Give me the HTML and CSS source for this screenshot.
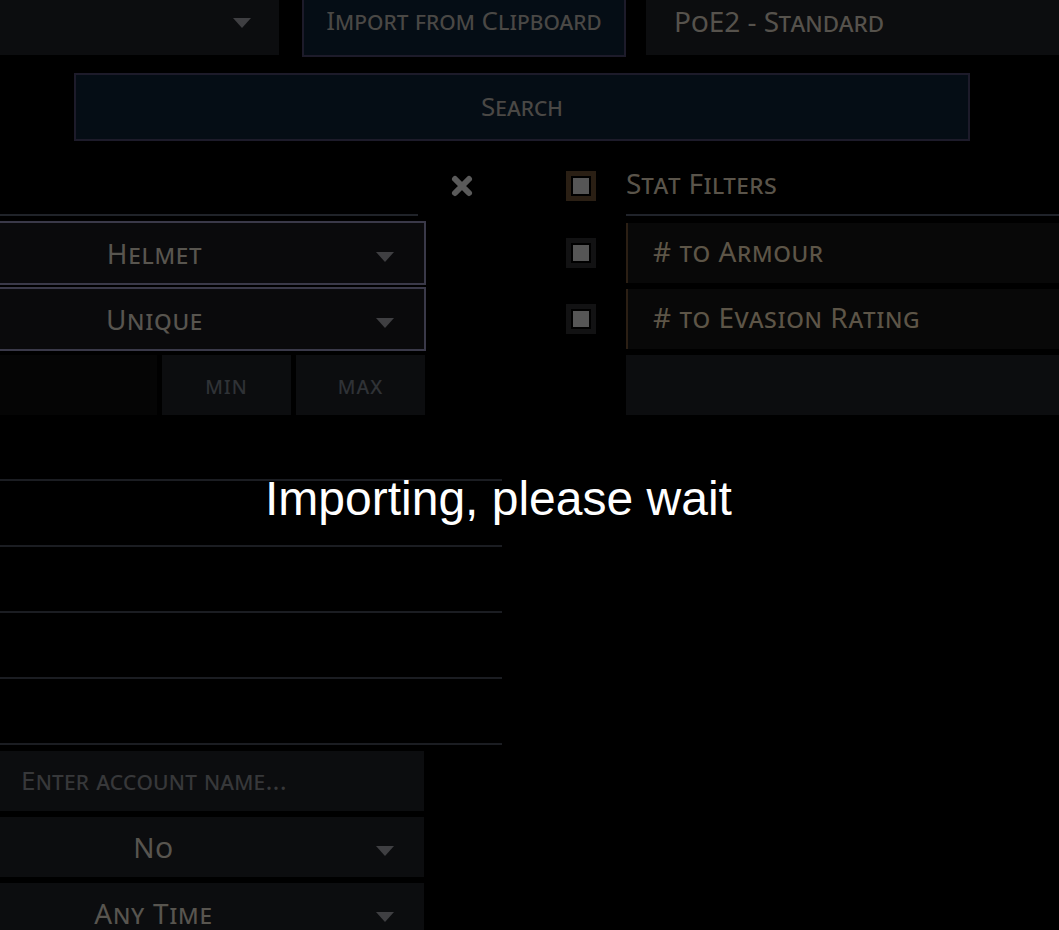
FILE: index.html
```html
<!DOCTYPE html>
<html lang="en">
<head>
<meta charset="utf-8">
<title>Trade - Importing</title>
<link rel="stylesheet" href="styles.css">
</head>
<body>
<div class="page">
  <header class="topbar">
    <div class="league-select"><span class="caret"></span></div>
    <button class="btn import-btn">Import from Clipboard</button>
    <div class="league-box">PoE2 - Standard</div>
  </header>

  <div class="search-row">
    <button class="btn search-btn">Search</button>
  </div>

  <main class="filters">
    <section class="type-filters">
      <div class="panel-head">
        <div class="head-title"></div>
        <span class="remove">
          <svg width="26" height="24" viewBox="0 0 26 24"><path d="M6 5 L20 19 M20 5 L6 19" stroke="#5a5a5a" stroke-width="6" stroke-linecap="round" fill="none"/></svg>
        </span>
      </div>
      <div class="select bordered first"><span>Helmet</span><span class="caret"></span></div>
      <div class="select bordered second"><span>Unique</span><span class="caret"></span></div>
      <div class="range">
        <div class="range-label"></div>
        <div class="range-input">min</div>
        <div class="range-input">max</div>
      </div>
      <div class="blank-row"></div>
      <div class="blank-row"></div>
      <div class="blank-row"></div>
      <div class="blank-row"></div>
      <div class="blank-row"></div>
      <input class="text-input" type="text" placeholder="Enter account name...">
      <div class="select plain"><span>No</span><span class="caret"></span></div>
      <div class="select plain"><span>Any Time</span><span class="caret"></span></div>
    </section>

    <section class="stat-filters">
      <div class="check head-check"><span class="check-dot"></span></div>
      <div class="stat-head">Stat Filters</div>
      <div class="check"><span class="check-dot"></span></div>
      <div class="stat-row"># to Armour</div>
      <div class="check"><span class="check-dot"></span></div>
      <div class="stat-row"># to Evasion Rating</div>
      <div class="stat-empty"></div>
    </section>
  </main>

  <div class="overlay">
    <p class="overlay-msg">Importing, please wait</p>
  </div>
</div>
</body>
</html>
```
FILE: styles.css
```css
html, body {
  margin: 0;
  padding: 0;
  background: #000;
  overflow: hidden;
  width: 1059px;
  height: 930px;
}

.page {
  font-family: "Noto Sans", "DejaVu Sans", sans-serif;
  font-variant-caps: small-caps;
  color: #57544f;
  width: 1059px;
  height: 930px;
  overflow: hidden;
  position: relative;
}

/* ---------- top bar ---------- */
.topbar {
  display: flex;
  align-items: flex-start;
  margin-top: -12px;
  height: 69px;
}

.league-select {
  position: relative;
  width: 279px;
  height: 67px;
  background: #0c0d0f;
  flex: 0 0 auto;
}
.league-select .caret {
  position: absolute;
  right: 28px;
  top: 30px;
}

.caret {
  width: 0;
  height: 0;
  border-left: 9.5px solid transparent;
  border-right: 9.5px solid transparent;
  border-top: 10px solid #3f3f42;
}

.btn {
  font-family: inherit;
  font-variant-caps: small-caps;
  font-size: 26px;
  color: #4a4845;
  background: #050d15;
  border: 2px solid #1d1b2a;
  padding: 0;
  margin: 0;
  display: flex;
  align-items: center;
  justify-content: center;
  box-sizing: border-box;
}

.import-btn {
  margin-left: 23px;
  width: 324px;
  height: 69px;
  border-top: none;
  padding-bottom: 3px;
}

.league-box {
  margin-left: 20px;
  flex: 1 1 auto;
  height: 67px;
  background: #0c0d0f;
  font-size: 28px;
  color: #56524c;
  display: flex;
  align-items: center;
  padding-left: 28px;
  box-sizing: border-box;
  padding-bottom: 1px;
}

/* ---------- search ---------- */
.search-row {
  margin-top: 16px;
  padding-left: 74px;
}
.search-btn {
  width: 896px;
  height: 68px;
  padding-bottom: 3px;
}

/* ---------- filters ---------- */
.filters {
  display: flex;
  margin-top: 17px;
  align-items: flex-start;
}

.type-filters {
  width: 502px;
  flex: 0 0 502px;
  display: flex;
  flex-direction: column;
}

.panel-head {
  display: flex;
  align-items: center;
  height: 58px;
}
.head-title {
  width: 418px;
  height: 58px;
  box-sizing: border-box;
  border-bottom: 2px solid #202329;
}
.remove {
  margin-left: 31px;
  display: flex;
  filter: blur(0.5px);
  margin-top: -2px;
}

.select {
  position: relative;
  box-sizing: border-box;
  display: flex;
  align-items: center;
  justify-content: center;
  font-size: 28px;
  letter-spacing: 0.7px;
  color: #58554f;
}
.select .caret {
  position: absolute;
  right: 30px;
  top: 29px;
}
.select.bordered {
  margin-left: -117px;
  width: 543px;
  height: 64px;
  border: 2px solid #3a3949;
  background: #0a0a0c;
}
.select.first { margin-top: 5px; }
.select.second { margin-top: 2px; }

.select.plain {
  margin-left: -117px;
  width: 541px;
  height: 60px;
  background: #0c0d0f;
  margin-top: 6px;
}

.range {
  margin-left: -117px;
  width: 542px;
  height: 60px;
  margin-top: 4px;
  display: flex;
  gap: 5px;
}
.range-label {
  flex: 1 1 auto;
  background: #050505;
}
.range-input {
  flex: 0 0 129px;
  background: #0c0d0f;
  font-size: 24px;
  color: #2f3236;
  display: flex;
  align-items: center;
  justify-content: center;
  letter-spacing: 1px;
  padding-bottom: 2px;
  box-sizing: border-box;
}

.blank-row {
  height: 66px;
  box-sizing: border-box;
  border-bottom: 2px solid #1b1d22;
}

.text-input {
  margin-top: 6px;
  width: 424px;
  height: 60px;
  box-sizing: border-box;
  border: none;
  outline: none;
  background: #0c0d0f;
  padding: 0 0 2px 21px;
  font-family: inherit;
  font-variant-caps: small-caps;
  font-size: 26px;
  letter-spacing: 0.2px;
  color: #57544f;
}
.text-input::placeholder {
  color: #37383a;
  font-variant-caps: small-caps;
}

/* ---------- stat filters ---------- */
.stat-filters {
  margin-left: 64px;
  flex: 0 0 600px;
  display: grid;
  grid-template-columns: 30px 1fr;
  grid-template-rows: 59px 60px 60px 60px;
  column-gap: 30px;
  row-gap: 6px;
}

.check {
  width: 30px;
  height: 30px;
  box-sizing: border-box;
  border: 5px solid #121213;
  padding: 2px;
  background: #000;
  align-self: center;
}
.check.head-check {
  align-self: start;
  margin-top: 13px;
  border-color: #2a1f14;
}
.check-dot {
  display: block;
  width: 16px;
  height: 16px;
  background: #565656;
}

.stat-head {
  height: 58px;
  align-self: start;
  box-sizing: border-box;
  border-bottom: 2px solid #20232a;
  font-size: 28px;
  letter-spacing: 0.4px;
  color: #5a544a;
  display: flex;
  align-items: center;
  padding-bottom: 6px;
}

.stat-row {
  background: #080808;
  border-left: 2px solid #2b1f14;
  font-size: 28px;
  letter-spacing: 0.6px;
  color: #5d5547;
  display: flex;
  align-items: center;
  padding-left: 25px;
  padding-bottom: 4px;
  box-sizing: border-box;
}

.stat-empty {
  grid-column: 2;
  background: #0c0d0f;
}

/* ---------- overlay ---------- */
.overlay {
  position: absolute;
  inset: 0;
  background: transparent;
}
.overlay-msg {
  position: absolute;
  left: 265px;
  top: 475px;
  margin: 0;
  font-family: "Liberation Sans", Arial, sans-serif;
  font-variant-caps: normal;
  font-size: 48px;
  line-height: 48px;
  color: #ffffff;
  white-space: nowrap;
}
```
